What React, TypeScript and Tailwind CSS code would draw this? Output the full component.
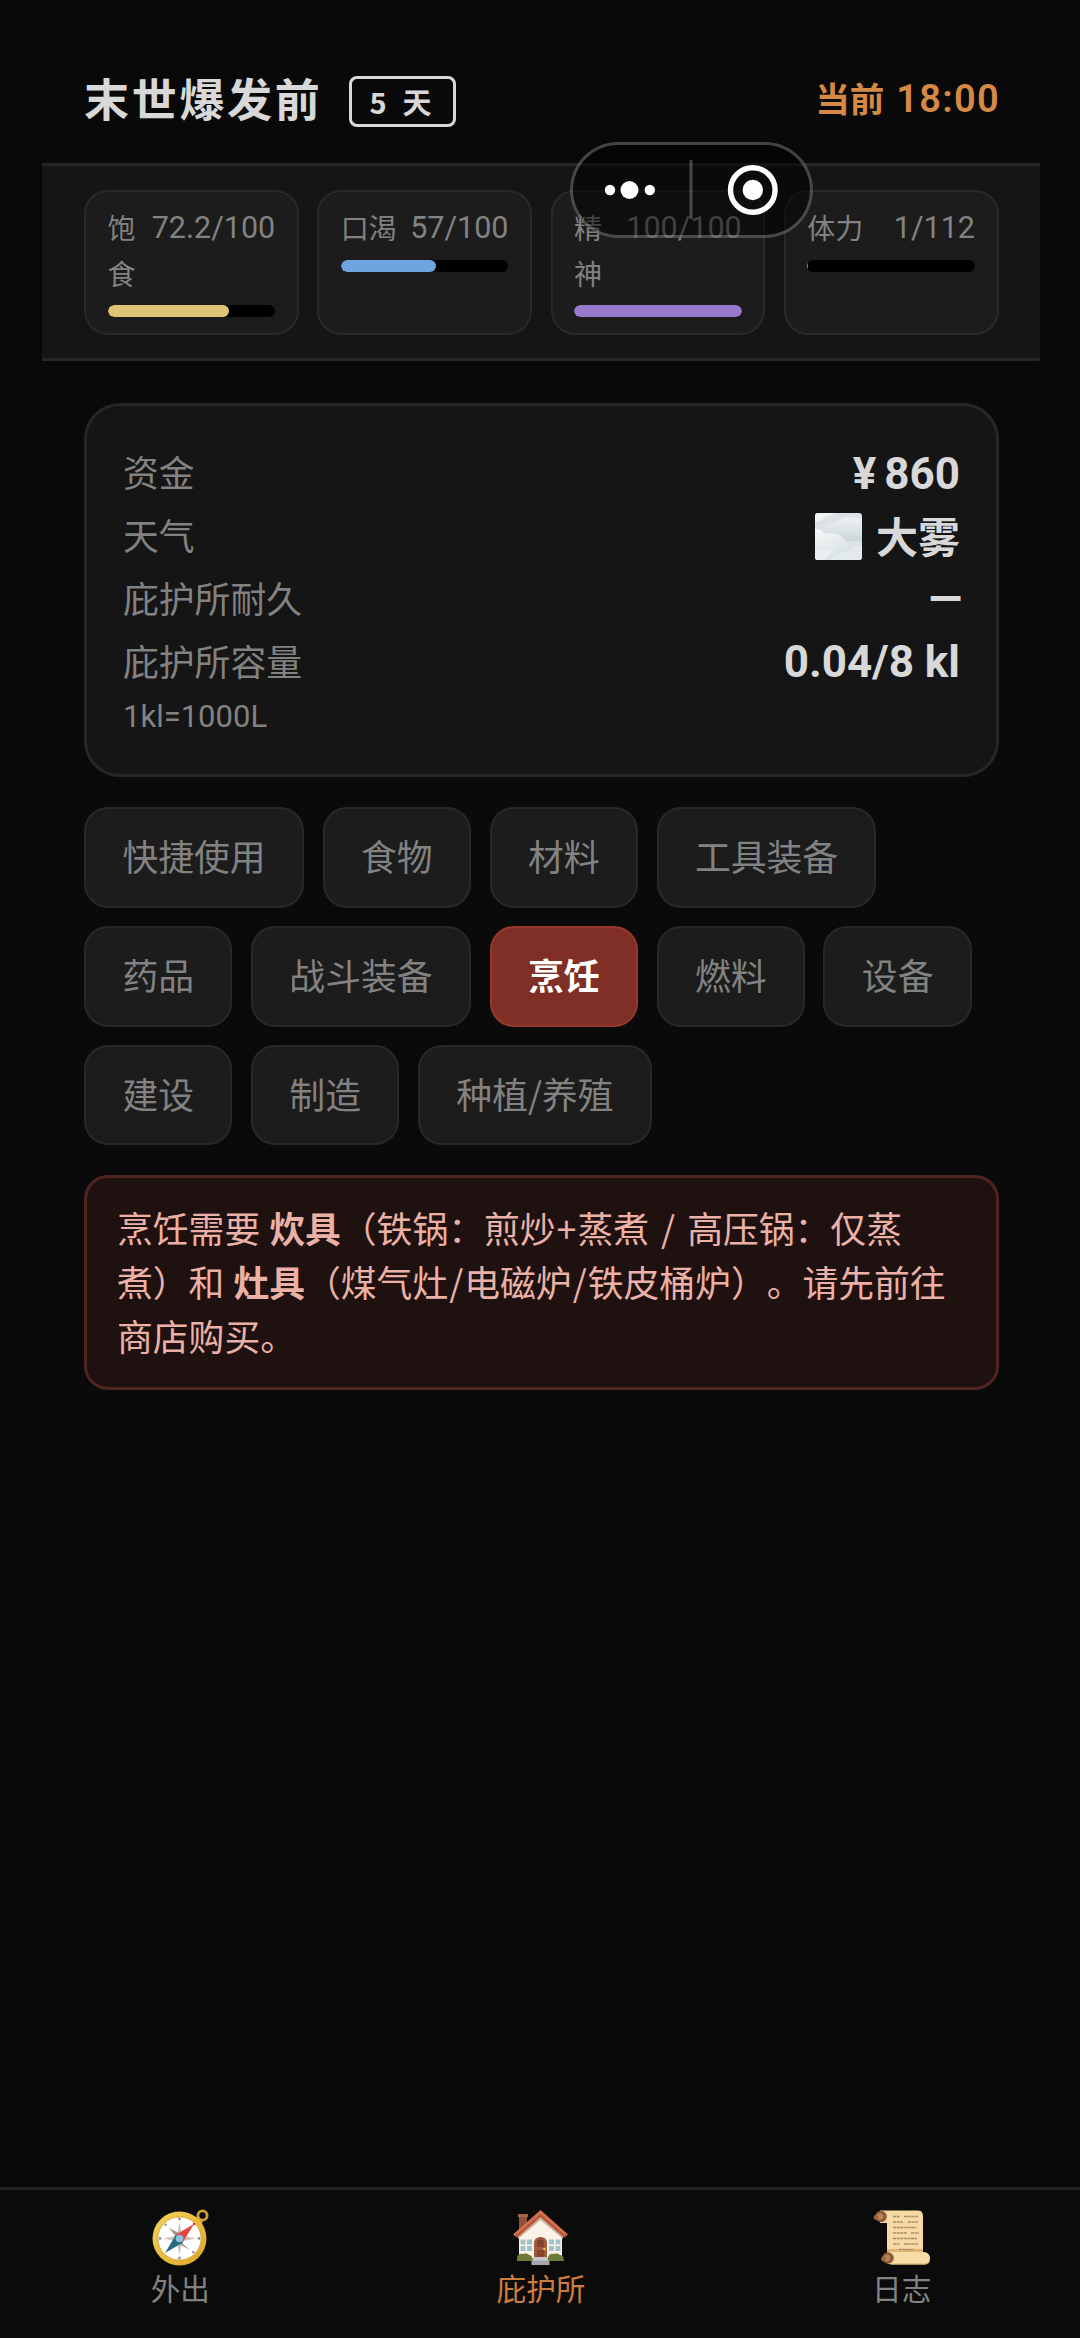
import { useState } from 'react'
import clsx from 'clsx'

const stats = [
  { name: '饱食', value: '72.2/100', percent: 72.2, color: 'bg-[#dfc476]' },
  { name: '口渴', value: '57/100', percent: 57, color: 'bg-[#6fa5df]' },
  { name: '精神', value: '100/100', percent: 100, color: 'bg-[#9879cc]' },
  { name: '体力', value: '1/112', percent: 0.5, color: 'bg-[#b9837c]' },
]

const tabs = [
  '快捷使用',
  '食物',
  '材料',
  '工具装备',
  '药品',
  '战斗装备',
  '烹饪',
  '燃料',
  '设备',
  '建设',
  '制造',
  '种植/养殖',
]

function FogIcon() {
  return (
    <svg className="h-[47px] w-[47px] rounded-[3px]" viewBox="0 0 47 47">
      <defs>
        <linearGradient id="fog-a" x1="0" y1="0" x2="0" y2="1">
          <stop offset="0" stopColor="#eef2f3" />
          <stop offset="1" stopColor="#cbd6da" />
        </linearGradient>
        <linearGradient id="fog-b" x1="0" y1="0" x2="0.4" y2="1">
          <stop offset="0" stopColor="#f7f9f9" />
          <stop offset="1" stopColor="#d9e2e4" />
        </linearGradient>
      </defs>
      <rect width="47" height="47" fill="#dde3e5" />
      <path d="M0 0h20c-2 2-8 2-11 5-3 2-6 3-9 4z" fill="#f0f3f4" />
      <path d="M9 18C11 11 17 9 22 10c3-6 12-8 25-4v22H9z" fill="url(#fog-a)" />
      <path d="M0 16c6 0 8 3 10 5 8-3 17 0 22 9 4 5 2 12-4 17H0z" fill="url(#fog-b)" />
      <path d="M47 32c-7 0-11 3-13 6-6 0-14 3-20 9h33z" fill="#e2eaec" />
      <path d="M0 37c8 1 14-1 20 2-5 1-8 5-11 8H0z" fill="#eaf0f1" />
    </svg>
  )
}

function CompassIcon() {
  return (
    <svg className="h-[57px] w-[57px]" viewBox="0 0 57 57">
      <defs>
        <linearGradient id="compass-ring" x1="0" y1="0" x2="1" y2="1">
          <stop offset="0" stopColor="#f4d35a" />
          <stop offset="1" stopColor="#dca526" />
        </linearGradient>
      </defs>
      <circle cx="50.5" cy="6.5" r="4.6" fill="none" stroke="#cf9f2f" strokeWidth="2.8" />
      <path d="M41 10l5-3 5 6-4 4z" fill="#d8a832" />
      <circle cx="27.5" cy="29.5" r="27" fill="url(#compass-ring)" />
      <circle cx="27.5" cy="29.5" r="21.6" fill="#fff" stroke="#d2a23a" strokeWidth="0.8" />
      <path d="M27.5 13l2.7 13.8L44 29.5l-13.8 2.7L27.5 46l-2.7-13.8L11 29.5l13.8-2.7z" fill="#cfc3b8" />
      <path d="M17 19l12 6 2 10 7 6-13-7-1-6z" fill="#a3988e" />
      <circle cx="27.5" cy="10" r="1.4" fill="#8f9496" />
      <circle cx="27.5" cy="49" r="1.4" fill="#8f9496" />
      <circle cx="8" cy="29.5" r="1.4" fill="#8f9496" />
      <circle cx="47" cy="29.5" r="1.4" fill="#8f9496" />
      <circle cx="13.7" cy="15.7" r="1.2" fill="#8f9496" />
      <circle cx="41.3" cy="43.3" r="1.2" fill="#8f9496" />
      <path d="M42 15L24 25.5l7 7.5z" fill="#e0473f" />
      <path d="M13 44l18-10.5-7-8z" fill="#2a6a83" />
      <circle cx="42" cy="15" r="1.2" fill="#c3362f" />
      <circle cx="27.5" cy="29.5" r="3.8" fill="#8cc3dd" />
    </svg>
  )
}

function HouseIcon() {
  return (
    <svg className="h-[57px] w-[57px]" viewBox="0 0 57 57">
      <path d="M7 6h8v16H7z" fill="#8e5238" />
      <path d="M6 5h10v3H6z" fill="#a86546" />
      <path d="M28.5 8L7 27v24h43V27z" fill="#faf3e6" />
      <path d="M28.5 6L6 25v5l22.5-19L51 30v-5z" fill="#c9b39b" />
      <path d="M28.5 1L1 25.5l4 3L28.5 8 52 28.5l4-3z" fill="#d4724f" />
      <path d="M1 25.5l4 3L28.5 8 52 28.5l4-3-1-1-3 1L28.5 5 4 26z" fill="#b9543a" />
      <path d="M22 51V34c0-8 13-8 13 0v17z" fill="#a05a40" />
      <path d="M25 38v-5c1-4 6-4 7 0v5zM25 41h7v7h-7z" fill="#84442f" />
      <circle cx="32.5" cy="40" r="1.3" fill="#eec04f" />
      <path d="M8.5 30.5h5v5h-5zM15 30.5h5v5h-5zM8.5 37h5v5h-5zM15 37h5v5h-5z" fill="#9fc4cb" />
      <path d="M37 30.5h5v5h-5zM43.5 30.5h5v5h-5zM37 37h5v5h-5zM43.5 37h5v5h-5z" fill="#9fc4cb" />
      <path d="M5 52v-4c1-3 4-4 6-3 3-1 5 0 6 1 2 0 4 2 4 6zM36 52v-4c1-3 4-4 6-3 3-1 5 0 6 1 2 0 4 2 4 6z" fill="#6d7b3a" />
      <path d="M21 48h15v4H21z" fill="#c3c5c8" />
      <path d="M19.5 51.5h18V56h-18z" fill="#a3a7ac" />
    </svg>
  )
}

function ScrollIcon() {
  return (
    <svg className="h-[57px] w-[57px]" viewBox="0 0 57 57">
      <path d="M7 1.5h38c4 0 5 3 5 6V45H14V14H7z" fill="#f7d9a3" />
      <path d="M14 40h36v5H14z" fill="#dfb574" />
      <rect x="12" y="43" width="45" height="12.5" rx="6" fill="#f8dca8" />
      <path d="M18 54.5h33c3 0 5-2 6-4 0 3-2 5-5 5H18z" fill="#d9ad6c" />
      <circle cx="8" cy="7.5" r="5.8" fill="#8b5a3c" />
      <circle cx="7" cy="7.5" r="3.2" fill="#bd8357" />
      <circle cx="3" cy="8.5" r="2.4" fill="#9a6543" />
      <circle cx="15" cy="49" r="5.8" fill="#8b5a3c" />
      <circle cx="14" cy="49" r="3.2" fill="#bd8357" />
      <circle cx="10.5" cy="50" r="2.4" fill="#9a6543" />
      <path
        d="M20 7.5h7M31 7.5h14M20 13h10M35 13h10M20 18.5h23M20 24h14M38 24h8M20 29.5h24M20 35h7M31 35h14M26 40.5h15"
        stroke="#a98d68"
        strokeWidth="1.3"
        strokeDasharray="3 0.6"
      />
    </svg>
  )
}

const navItems = [
  { label: '外出', icon: <CompassIcon /> },
  { label: '庇护所', icon: <HouseIcon /> },
  { label: '日志', icon: <ScrollIcon /> },
]

function StatCard({ name, value, percent, color }: (typeof stats)[number]) {
  return (
    <div className="rounded-[24px] border-2 border-[#292929] bg-[#1c1c1c] px-[21.5px] pt-[13px] pb-4">
      <div className="flex justify-between gap-1 text-[28px] leading-[45.7px] text-[#828282]">
        <span>{name}</span>
        <span className="shrink-0 font-[Roboto] text-[30.5px] whitespace-nowrap">{value}</span>
      </div>
      <div className="mt-[9px] h-3 overflow-hidden rounded-full bg-black">
        <div className={clsx('h-full rounded-full', color)} style={{ width: `${percent}%` }} />
      </div>
    </div>
  )
}

function InfoRow({ label, children }: { label: string; children: React.ReactNode }) {
  return (
    <div className="flex h-[62.8px] items-center justify-between">
      <span className="pb-[3px] text-[35.8px] text-[#828282]">{label}</span>
      <span className="flex items-center text-[42px] font-bold text-[#d8d8d8]">{children}</span>
    </div>
  )
}

// Floating mini-program menu (more / close)
function Capsule() {
  return (
    <div className="absolute top-[142px] left-[570px] z-10 h-24 w-[243px] rounded-full border-[3px] border-white/25 bg-black/50">
      <svg className="h-full w-full" viewBox="0 0 237 90">
        <g fill="#fff">
          <circle cx="37" cy="45" r="5.2" />
          <circle cx="56.5" cy="45" r="9" />
          <circle cx="76.8" cy="45" r="5.2" />
          <circle cx="179.8" cy="45" r="10.2" />
        </g>
        <circle cx="179.8" cy="45" r="22.3" fill="none" stroke="#fff" strokeWidth="5.4" />
        <path d="M118 15v59" stroke="#fff" strokeOpacity="0.25" strokeWidth="3" />
      </svg>
    </div>
  )
}

export default function App() {
  const [activeTab, setActiveTab] = useState('烹饪')
  const [activeNav, setActiveNav] = useState('庇护所')

  return (
    <div className="relative flex h-[2338px] w-[1080px] flex-col overflow-hidden bg-[#0a0a0a] font-['Noto_Sans_CJK_SC',sans-serif]">
      <Capsule />

      {/* Header */}
      <header className="mt-9 mr-10 ml-[42px] bg-[#090909] shadow-[0_2px_18px_rgba(0,0,0,0.3)]">
        <div className="flex h-[127px] items-center justify-between px-[42px]">
          <div className="flex items-center">
            <h1 className="pb-1 text-[45px] leading-none font-bold tracking-[2.7px] text-[#d8d8d8]">末世爆发前</h1>
            <span className="mt-1 ml-[26px] flex h-[51px] w-[107px] items-center justify-center rounded-lg border-[3px] border-[#d8d8d8] pr-[3px] text-[29px] leading-none font-bold text-[#d8d8d8]">
              <span className="mr-4">5</span>
              <span>天</span>
            </span>
          </div>
          <div className="flex items-center text-[34.5px] font-bold text-[#d68944]">
            <span className="pb-[3px]">当前</span>
            <span className="-mr-[2px] ml-3 font-[Roboto] text-[38px] font-semibold tracking-[1.3px]">18:00</span>
          </div>
        </div>
        <div className="grid grid-cols-4 gap-[18.6px] border-t-[3px] border-b-[3px] border-[#262626] bg-[#151515] pt-6 pr-[41.5px] pb-[23px] pl-[42px]">
          {stats.map((stat) => (
            <StatCard key={stat.name} {...stat} />
          ))}
        </div>
      </header>

      <main className="mt-[42px] mr-[81px] ml-[84px] flex-1">
        {/* Shelter overview */}
        <section className="h-[374px] rounded-[36px] border-[3px] border-[#262626] bg-[#151515] px-9 pt-9">
          <InfoRow label="资金">
            <span className="font-[Roboto] text-[44px]">
              <span className="mr-2">¥</span>860
            </span>
          </InfoRow>
          <InfoRow label="天气">
            <FogIcon />
            <span className="ml-3.5 pb-[5px]">大雾</span>
          </InfoRow>
          <InfoRow label="庇护所耐久">
            <span className="-mr-0.5 font-[Roboto] text-[44px]">—</span>
          </InfoRow>
          <InfoRow label="庇护所容量">
            <span className="font-[Roboto] text-[44px]">0.04/8 kl</span>
          </InfoRow>
          <div className="font-[Roboto] text-[31px] leading-[46px] text-[#828282]">1kl=1000L</div>
        </section>

        {/* Category tabs */}
        <div className="mt-[30px] flex flex-wrap gap-x-[18.6px] gap-y-[18px]">
          {tabs.map((tab) => (
            <button
              key={tab}
              onClick={() => setActiveTab(tab)}
              className={clsx(
                'h-[100.7px] rounded-[24px] border-2 px-[36.4px] pb-[3px] text-[35.8px] leading-none',
                tab === activeTab
                  ? 'border-[#96382e] bg-[#802f26] font-bold text-white'
                  : 'border-[#282828] bg-[#1c1c1c] text-[#828282]',
              )}
            >
              {tab}
            </button>
          ))}
        </div>

        {/* Cooking requirement notice */}
        <div className="mt-[30px] h-[215px] rounded-[24px] border-[3px] border-[#502421] bg-[#1e110f] pt-[23px] pl-[30px] text-[35.8px] leading-[53.7px] [word-spacing:1px] whitespace-nowrap text-[#ebb1a7] [text-spacing-trim:space-all]">
          烹饪需要 <strong>炊具</strong>（铁锅：煎炒<span className="mx-px">+</span>蒸煮
          <span className="mx-[3px]"> / </span>高压锅：仅蒸
          <br />
          煮）和 <strong>灶具</strong>（煤气灶<span className="mx-px">/</span>电磁炉
          <span className="mx-px">/</span>铁皮桶炉）。请先前往
          <br />
          商店购买。
        </div>
      </main>

      {/* Bottom navigation */}
      <nav className="-mr-0.5 grid h-[151px] grid-cols-3 border-t-[3px] border-[#242424] bg-[#0b0b0b]">
        {navItems.map((item) => (
          <button
            key={item.label}
            onClick={() => setActiveNav(item.label)}
            className={clsx(
              'flex flex-col items-center pt-[19px] text-[29.6px]',
              item.label === activeNav ? 'text-[#cc7c3d]' : 'text-[#828282]',
            )}
          >
            {item.icon}
            <span className="leading-[44px]">{item.label}</span>
          </button>
        ))}
      </nav>
    </div>
  )
}
